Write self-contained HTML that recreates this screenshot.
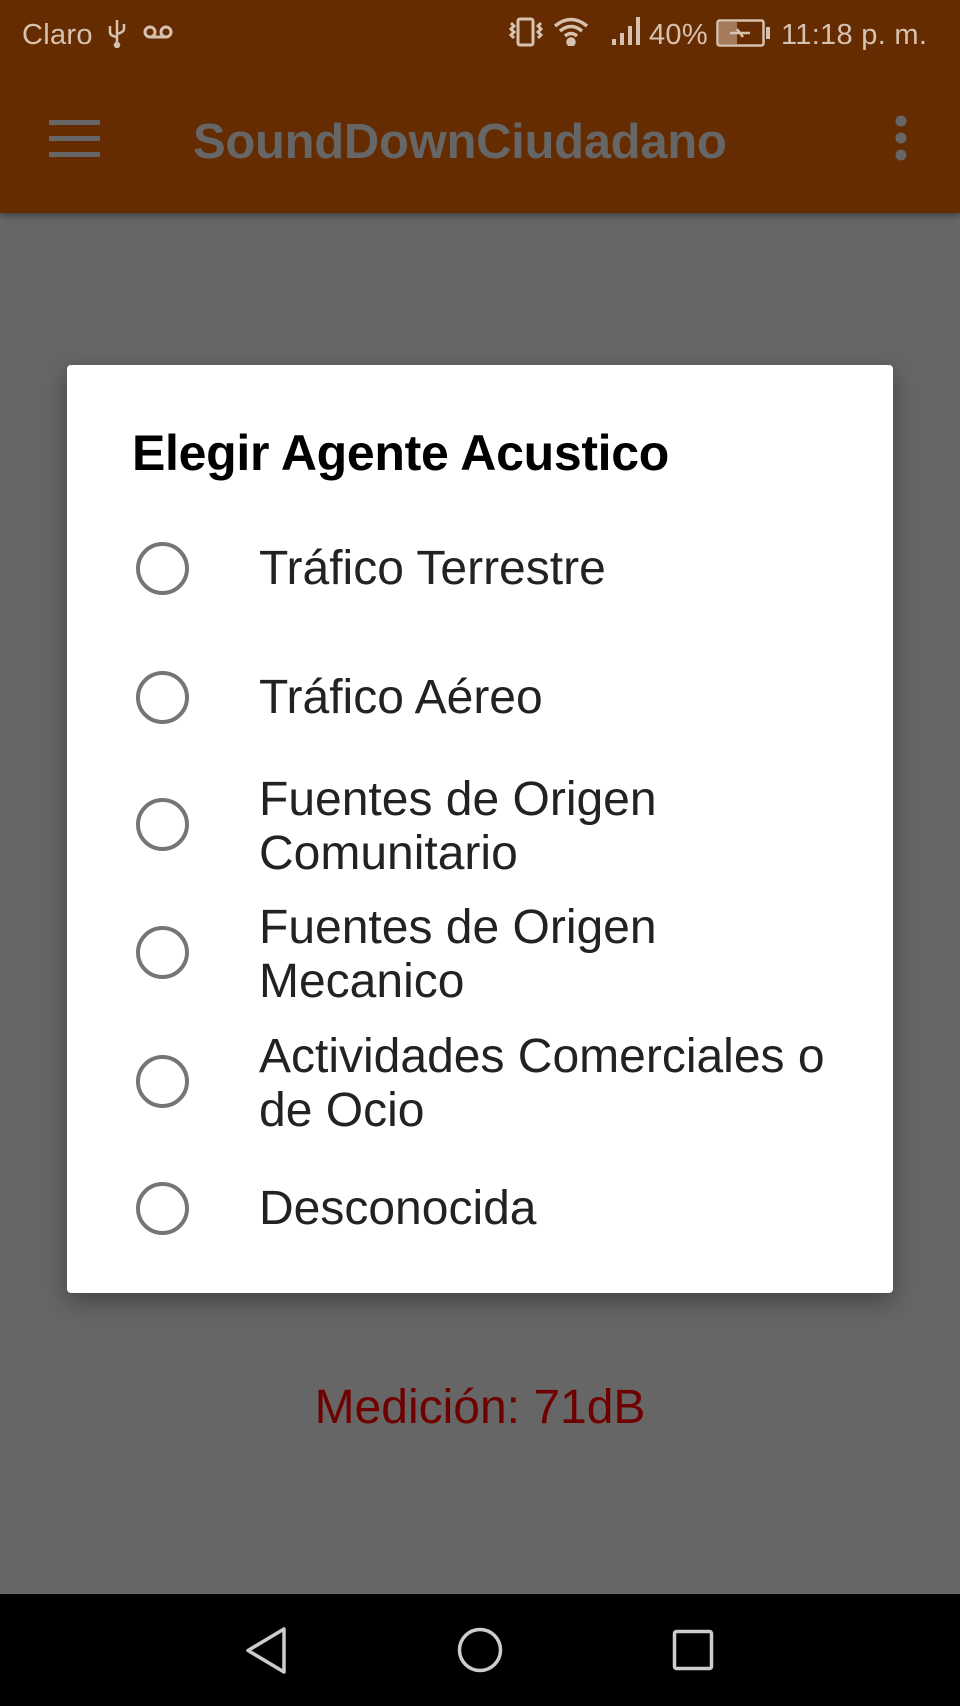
<!DOCTYPE html>
<html><head><meta charset="utf-8"><style>
*{margin:0;padding:0;box-sizing:border-box}
body{width:960px;height:1706px;position:relative;overflow:hidden;background:#666;font-family:"Liberation Sans",sans-serif}
.bar{position:absolute;left:0;top:0;width:960px;height:213px;background:#642c00;box-shadow:0 3px 6px rgba(0,0,0,.35)}
.st{position:absolute;color:#d7c2b0;font-size:29px;top:17px;line-height:36px;letter-spacing:0.3px}
.ttl{position:absolute;left:193px;top:114px;font-size:49px;font-weight:bold;color:#666;line-height:56px;letter-spacing:-0.3px}
.dlg{position:absolute;left:67px;top:365px;width:826px;height:928px;background:#fff;border-radius:4px;box-shadow:0 8px 24px rgba(0,0,0,.35)}
.h{position:absolute;left:65px;top:58px;font-size:50px;font-weight:bold;color:#000;line-height:60px;letter-spacing:-0.3px}
.it{position:absolute;left:192px;font-size:48px;color:#222;line-height:54px;width:620px}
.rb{position:absolute;left:69px;width:53px;height:53px;border:4.5px solid #757575;border-radius:50%}
.med{position:absolute;left:0;width:960px;text-align:center;top:1380px;font-size:48px;color:#6e0000;line-height:56px}
.nav{position:absolute;left:0;top:1594px;width:960px;height:112px;background:#000}
</style></head><body>
<div class="bar">
 <div class="st" style="left:22px">Claro</div>
 <svg style="position:absolute;left:105px;top:18px" width="24" height="30" viewBox="0 0 24 30" fill="none" stroke="#d7c2b0" stroke-width="2.5"><path d="M12 2v26M5 8v6q0 4 7 5M19 6v5q0 3-7 5"/><circle cx="12" cy="27" r="2" fill="#d7c2b0"/></svg>
 <svg style="position:absolute;left:142px;top:24px" width="32" height="16" viewBox="0 0 32 16" fill="none" stroke="#d7c2b0" stroke-width="3"><circle cx="8" cy="8" r="5"/><circle cx="24" cy="8" r="5"/><path d="M8 13h16"/></svg>
 <svg style="position:absolute;left:506px;top:17px" width="40" height="30" viewBox="0 0 40 30" fill="none" stroke="#d7c2b0" stroke-width="3"><rect x="12" y="2" width="15" height="26" rx="2"/><path d="M5 6l3 3-3 3 3 3-3 3 3 3M35 6l-3 3 3 3-3 3 3 3-3 3"/></svg>
 <svg style="position:absolute;left:553px;top:16px" width="36" height="30" viewBox="0 0 36 30" fill="none" stroke="#d7c2b0" stroke-width="3.5"><path d="M2 10q16-13 32 0M7 15q11-9 22 0M12 20q6-5 12 0"/><circle cx="18" cy="26" r="3" fill="#d7c2b0"/></svg>
 <svg style="position:absolute;left:612px;top:17px" width="32" height="28" viewBox="0 0 32 28" fill="#d7c2b0"><rect x="0" y="22" width="4" height="6"/><rect x="8" y="16" width="4" height="12"/><rect x="16" y="9" width="4" height="19"/><rect x="24" y="0" width="4" height="28"/></svg>
 <div class="st" style="left:649px">40%</div>
 <svg style="position:absolute;left:716px;top:19px" width="56" height="28" viewBox="0 0 56 28" fill="none" stroke="#d7c2b0" stroke-width="2.5"><rect x="1.5" y="1.5" width="46" height="25" rx="2"/><rect x="3" y="3" width="18" height="22" fill="#a57a5a" stroke="none"/><path d="M52 8v12" stroke-width="4"/><path d="M14 14h10l-3-4M34 14h-10l3 4" stroke-width="2.5"/></svg>
 <div class="st" style="left:781px">11:18 p. m.</div>
 <svg style="position:absolute;left:49px;top:120px" width="52" height="38" viewBox="0 0 52 38" fill="#666"><rect y="0" width="51" height="5"/><rect y="16" width="51" height="5"/><rect y="32" width="51" height="5"/></svg>
 <div class="ttl">SoundDownCiudadano</div>
 <svg style="position:absolute;left:894px;top:114px" width="14" height="48" viewBox="0 0 14 48" fill="#666"><circle cx="7" cy="7" r="5.5"/><circle cx="7" cy="24" r="5.5"/><circle cx="7" cy="41" r="5.5"/></svg>
</div>
<div class="med">Medición: 71dB</div>
<div class="dlg">
 <div class="h">Elegir Agente Acustico</div>
 <div class="rb" style="top:177px"></div><div class="it" style="top:177px">Tráfico Terrestre</div>
 <div class="rb" style="top:306px"></div><div class="it" style="top:306px">Tráfico Aéreo</div>
 <div class="rb" style="top:433px"></div><div class="it" style="top:408px">Fuentes de Origen<br>Comunitario</div>
 <div class="rb" style="top:561px"></div><div class="it" style="top:536px">Fuentes de Origen<br>Mecanico</div>
 <div class="rb" style="top:690px"></div><div class="it" style="top:665px">Actividades Comerciales o<br>de Ocio</div>
 <div class="rb" style="top:817px"></div><div class="it" style="top:817px">Desconocida</div>
</div>
<div class="nav">
 <svg style="position:absolute;left:245px;top:32px" width="44" height="48" viewBox="0 0 44 48" fill="none" stroke="#ccc" stroke-width="3.5" stroke-linejoin="round"><path d="M39 3v43L3 24.5z"/></svg>
 <svg style="position:absolute;left:456px;top:32px" width="48" height="48" viewBox="0 0 48 48" fill="none" stroke="#ccc" stroke-width="3.5"><circle cx="24" cy="24" r="20.5"/></svg>
 <svg style="position:absolute;left:672px;top:35px" width="42" height="42" viewBox="0 0 42 42" fill="none" stroke="#ccc" stroke-width="3.5"><rect x="2.5" y="2.5" width="37" height="37" rx="2"/></svg>
</div>
</body></html>
